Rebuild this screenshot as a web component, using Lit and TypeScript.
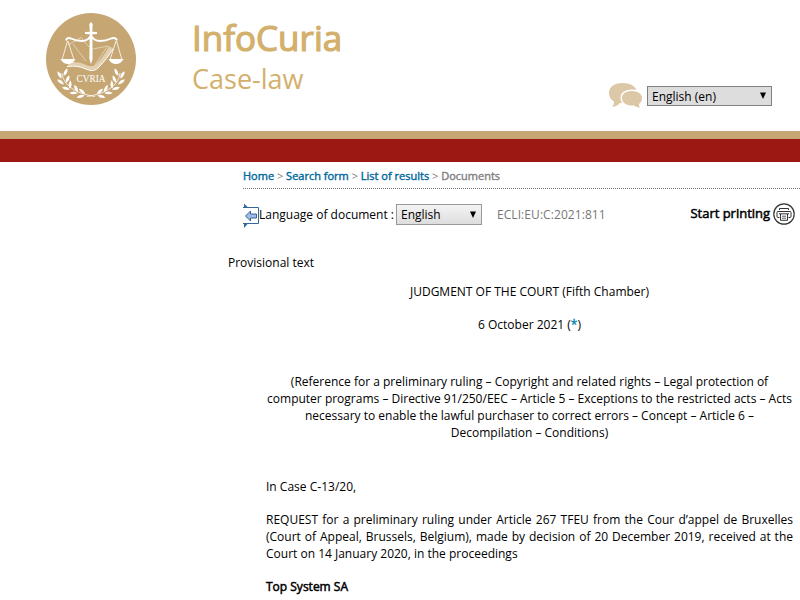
import { LitElement, html, css, svg } from "lit";
import { customElement } from "lit/decorators.js";

// Laurel leaves as [x, y, rotation] for the left branch; the right one is its mirror image.
const leaves = [
  [19.5, 59, 115], [13.5, 62, 60], [21.5, 66, 115], [14.5, 69, 35], [24, 71.5, 95], [20, 75.5, 15], [30, 75.5, 65], [27.5, 80, 0], [36, 78.5, 40], [34.5, 83.5, -15],
];

@customElement("curia-seal")
export class CuriaSeal extends LitElement {
  static styles = css`
    :host { display: block; width: 90px; height: 92px; }
    svg { display: block; }
    text { font-family: "Liberation Serif", serif; font-size: 9.8px; fill: #fff; }
  `;
  render() {
    const branch = svg`
      <path d="M16 60 C17 70 26 80 49 83.5" fill="none" stroke="#fff" stroke-width="0.8"/>
      ${leaves.map(
        ([x, y, a]) => svg`<path d="M-4.2 0 Q0 -3.2 4.2 0 Q0 2.6 -4.2 0 Z" fill="#fff" transform="translate(${x} ${y}) rotate(${a})"/>`
      )}`;
    return html`<svg width="90" height="92" viewBox="0 0 90 92">
      <ellipse cx="45" cy="46" rx="45" ry="46" fill="#c6a774"/>
      <path d="M22 32 L35 24.5 L43 34 M47 36 L62 33 L67 36 M27 31 L40 48 M61 34 L49 52" fill="none" stroke="#e9dbc2" stroke-width="0.8"/>
      <path d="M22 51.5 Q32 50 40 54 Q47 57 51 53 Q58 47 64.5 35" fill="none" stroke="#e2d0b0" stroke-width="4"/>
      <path d="M21 53.5 Q32 52 40 56 Q48 60 53 54 Q61 46 67 36" fill="none" stroke="#fff" stroke-width="1"/>
      <path d="M45 9 L46.7 11 L46.3 18.8 L51 19 L51 21 L46.4 21.2 L46.6 46 L45 51 L43.4 46 L43.7 21.2 L39 21 L39 19 L43.8 18.8 L43.3 11 Z" fill="#fff"/>
      <path d="M20 27.5 Q21 24 25 25.5 Q30 28 36 28 Q42 27.5 44 24 H46 Q48 27.5 54 28 Q60 28 65 25.5 Q70 24 71 27.5" fill="none" stroke="#fff" stroke-width="1.9"/>
      <path d="M21.5 28 L16 47 M22 28 L28 47 M70 28 L64 47 M70.5 28 L76 47" fill="none" stroke="#fff" stroke-width="0.8"/>
      <path d="M14.5 46 H29.5 Q27 51 22 51 Q17 51 14.5 46 Z M62.5 46 H77.5 Q75 51 70 51 Q65 51 62.5 46 Z" fill="#fff"/>
      <text x="30.5" y="68.7" textLength="29" lengthAdjust="spacingAndGlyphs">CVRIA</text>
      <g>${branch}</g>
      <g transform="translate(90 0) scale(-1 1)">${branch}</g>
    </svg>`;
  }
}

@customElement("select-box")
export class SelectBox extends LitElement {
  static properties = { label: {} };
  declare label: string;
  static styles = css`
    :host { box-sizing: border-box; display: flex; align-items: center; justify-content: space-between; padding: 0 4px; font-size: 12px; line-height: 17px; color: #000; }
    svg { display: block; }
  `;
  render() {
    return html`<span>${this.label}</span><svg width="8" height="8" viewBox="0 0 8 8"><path d="M1 0.5 H7 L4 7 Z" fill="#000"/></svg>`;
  }
}

@customElement("app-root")
export class AppRoot extends LitElement {
  static styles = css`
    :host { display: block; height: 600px; overflow: hidden; background: #fff; color: #000; font-family: "Open Sans", sans-serif; font-size: 12px; line-height: 17px; }
    .header { display: flex; box-sizing: border-box; height: 131px; padding: 13px 28px 0 46px; }
    .titles { margin-left: 56px; flex: 1; color: #d3b06c; }
    .name { font-size: 35px; line-height: 49px; -webkit-text-stroke: 1.2px #d3b06c; }
    .sub { font-size: 27px; line-height: 36px; margin-top: -1px; }
    .lang { display: flex; align-items: flex-start; padding-top: 69px; }
    .bubbles { width: 35px; height: 28px; margin-right: 4px; }
    .lang select-box { width: 125px; height: 20px; margin-top: 4px; border: 1px solid #808080; background: #ddd; }
    .gold { height: 8px; background: #c6a774; }
    .red { height: 23px; background: #9b1813; }
    .crumbs { box-sizing: border-box; height: 27px; margin-left: 243px; padding-top: 6px; line-height: 16px; font-size: 11px; color: #808080; border-bottom: 1px dotted #777; }
    .crumbs a { color: #00689b; -webkit-text-stroke: 0.4px #00689b; }
    .crumbs .here { -webkit-text-stroke: 0.4px #808080; }
    .tools { display: flex; align-items: center; margin: 14px 5px 0 243px; height: 24px; }
    .tools select-box { width: 86px; height: 21px; margin-left: 2px; border: 1px solid #999; background: linear-gradient(#f4f4f4, #ddd); margin-top: -1px; }
    .label { margin-top: -2px; }
    .ecli { margin-left: 15px; color: #777; flex: 1; margin-top: -2px; letter-spacing: 0.07px; }
    .print { font-size: 13px; margin-right: 3px; margin-top: -3px; letter-spacing: -0.02px; }
    .bold, .print { -webkit-text-stroke: 0.5px #000; }
    .printer { margin-top: -3px; }
    .tools svg { display: block; flex: none; }
    .back { margin-top: 2px; }
    .provisional { margin: 27px 0 0 228px; }
    .doc { margin: 12px 7px 0 266px; }
    .doc p { margin: 0 0 16px; }
    .doc .c { text-align: center; }
    .doc .j { text-align: justify; }
    .doc .date { margin-bottom: 40px; }
    .doc .ref { margin-bottom: 37px; }
    .note { color: #0080b0; -webkit-text-stroke: 0.3px #0080b0; }
  `;
  render() {
    return html`
      <div class="header">
        <curia-seal></curia-seal>
        <div class="titles"><div class="name">InfoCuria</div><div class="sub">Case-law</div></div>
        <div class="lang">
          <svg class="bubbles" viewBox="0 0 35 28">
            <path d="M15 1 C6 1 1 5 1 11 C1 15 3 18 6 19.5 C6 22 5 24 4 25 C8 24.5 10 23 12 21 H17 C25 20 29 16 29 10 C28 4 22 1 15 1 Z" fill="#dcc8a6"/>
            <path d="M24 9 C17.5 9 14 12 14 16 C14 21 19 24 26 23.5 C28 25 30 25.5 32 25.5 C31 24.5 31 23.5 31 22 C33 20.5 34 18.5 34 16 C34 12 30 9 24 9 Z" fill="#dcc8a6" stroke="#fff" stroke-width="3" paint-order="stroke"/>
          </svg>
          <select-box .label=${"English (en)"}></select-box>
        </div>
      </div>
      <div class="gold"></div>
      <div class="red"></div>
      <div class="crumbs"><a>Home</a> &gt; <a>Search form</a> &gt; <a>List of results</a> &gt; <span class="here">Documents</span></div>
      <div class="tools">
        <svg class="back" width="16" height="24" viewBox="0 0 16 24">
          <path d="M0 3.5 H15.5 V19.5 H0" fill="#fff" stroke="#336799"/>
          <path d="M1 -0.5 L5 3.5 H1 Z M1 24 L5 19.5 H1 Z" fill="#336799"/>
          <path d="M2.5 12 L7.5 7 V10 H13.5 V14 H7.5 V17 Z" fill="#a0b9e6" stroke="#336799"/>
        </svg>
        <span class="label">Language of document :</span>
        <select-box .label=${"English"}></select-box>
        <span class="ecli">ECLI:EU:C:2021:811</span>
        <span class="print">Start printing</span>
        <svg class="printer" width="22" height="22" viewBox="0 0 22 22" fill="none" stroke="#333">
          <circle cx="11" cy="11" r="10.2" stroke-width="1.2"/>
          <path d="M6.5 7 V5.5 H15.5 V7 M6.5 14.5 H5 Q4 14.5 4 13.5 V9.5 Q4 8.5 5 8.5 H17 Q18 8.5 18 9.5 V13.5 Q18 14.5 17 14.5 H15.5 M6 10.8 H16 M7.5 11 V17.3 H14.5 V11" stroke-width="1"/>
          <path d="M9 13.2 H13 M9 15.2 H13" stroke-width="0.8"/>
        </svg>
      </div>
      <div class="provisional">Provisional text</div>
      <div class="doc">
        <p class="c">JUDGMENT OF THE COURT (Fifth Chamber)</p>
        <p class="c date">6 October 2021 (<span class="note">*</span>)</p>
        <p class="c ref">(Reference for a preliminary ruling – Copyright and related rights – Legal protection of computer programs – Directive 91/250/EEC – Article 5 – Exceptions to the restricted acts – Acts necessary to enable the lawful purchaser to correct errors – Concept – Article 6 – Decompilation – Conditions)</p>
        <p>In Case C‑13/20,</p>
        <p class="j">REQUEST for a preliminary ruling under Article 267 TFEU from the Cour d’appel de Bruxelles (Court of Appeal, Brussels, Belgium), made by decision of 20 December 2019, received at the Court on 14 January 2020, in the proceedings</p>
        <p class="bold">Top System SA</p>
      </div>
    `;
  }
}
